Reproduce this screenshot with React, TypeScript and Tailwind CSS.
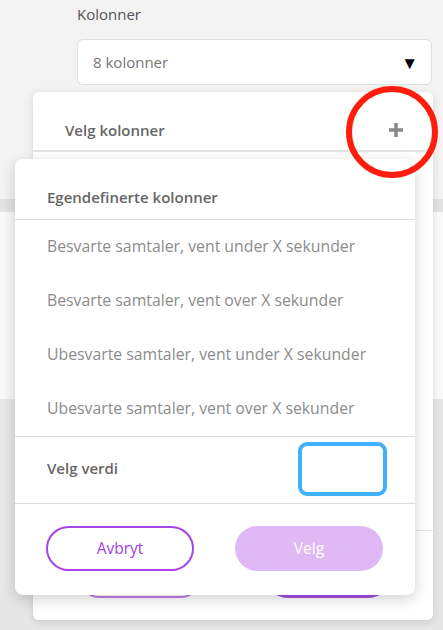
import React from "react";

const options = [
  "Besvarte samtaler, vent under X sekunder",
  "Besvarte samtaler, vent over X sekunder",
  "Ubesvarte samtaler, vent under X sekunder",
  "Ubesvarte samtaler, vent over X sekunder",
];

const App = () => {
  return (
    <div
      className="relative w-[443px] h-[630px] overflow-hidden bg-[#f3f3f3]"
      style={{ fontFamily: '"Open Sans", sans-serif' }}
    >
      {/* page underneath */}
      <div className="flex flex-col">
        <div className="pl-[77px] pr-[11px] pt-[4px]">
          <p className="text-[15px] text-[#555] leading-[20px]">Kolonner</p>
          <div className="mt-[15px] h-[46px] rounded-md border border-[#dedede] bg-white flex items-center justify-between pl-[15px] pr-[13px]">
            <span className="text-[15px] text-[#777]">8 kolonner</span>
            <span className="text-[17px] leading-none text-black">▼</span>
          </div>
        </div>
        <div className="mt-[114px] h-[13px] bg-[#e2e2e2]" />
        <div className="h-[187px] bg-[#f9f9f9]" />
        <div className="h-[232px] bg-[#e6e6e6]" />
      </div>

      {/* column picker card */}
      <div className="absolute left-[33px] top-[92px] w-[400px] h-[528px] rounded-md bg-white shadow-[0_2px_8px_rgba(0,0,0,0.12)] flex flex-col">
        <div className="h-[60px] pt-[18px] flex items-center justify-between pl-[32px] pr-[29px] border-b-2 border-[#e4e4e4]">
          <span className="text-[15px] font-semibold text-[#666]">Velg kolonner</span>
          <svg width="16" height="16" viewBox="0 0 16 16">
            <path d="M8 1v14M1 8h14" stroke="#888" strokeWidth="3.5" />
          </svg>
        </div>
        <div className="flex-1" />
        <div className="h-[90px] border-t border-[#e4e4e4] flex items-end justify-between pl-[44px] pr-[42px] pb-[22px]">
          <div className="w-[126px] h-[45px] rounded-full border-2 border-[#c27df0]" />
          <div className="w-[126px] h-[45px] rounded-full bg-[#a54ddc]" />
        </div>
      </div>

      {/* custom columns dialog */}
      <div className="absolute left-[15px] top-[159px] w-[400px] h-[436px] rounded-lg bg-white shadow-[0_4px_14px_rgba(0,0,0,0.18)] flex flex-col">
        <div className="h-[61px] pt-[17px] flex items-center px-[32px] border-b border-[#dcdcdc]">
          <span className="text-[15px] font-semibold text-[#666]">Egendefinerte kolonner</span>
        </div>
        <ul className="flex flex-col">
          {options.map((o) => (
            <li key={o} className="h-[54px] flex items-center px-[32px] text-[15.8px] text-[#8c8c8c]">
              {o}
            </li>
          ))}
        </ul>
        <div className="h-[68px] flex items-center justify-between border-t border-b border-[#dcdcdc] pl-[32px] pr-[28px]">
          <span className="text-[15px] font-semibold text-[#666] pb-[4px]">Velg verdi</span>
          <div className="w-[89px] h-[54px] mb-[2px] rounded-[9px] border-4 border-[#41b1fb]" />
        </div>
        <div className="flex-1 flex items-center justify-between pl-[31px] pr-[32px] pb-[2px]">
          <button className="w-[148px] h-[45px] rounded-full border-2 border-[#a745e6] text-[15.5px] text-[#a23fe0]">
            Avbryt
          </button>
          <button className="w-[148px] h-[45px] rounded-full bg-[#dfb8f5] text-[15.5px] text-white">
            Velg
          </button>
        </div>
      </div>

      {/* annotation */}
      <div className="absolute left-[346px] top-[86px] w-[92px] h-[92px] rounded-full border-[6px] border-[#ff1e0e]" />
    </div>
  );
};

export default App;
